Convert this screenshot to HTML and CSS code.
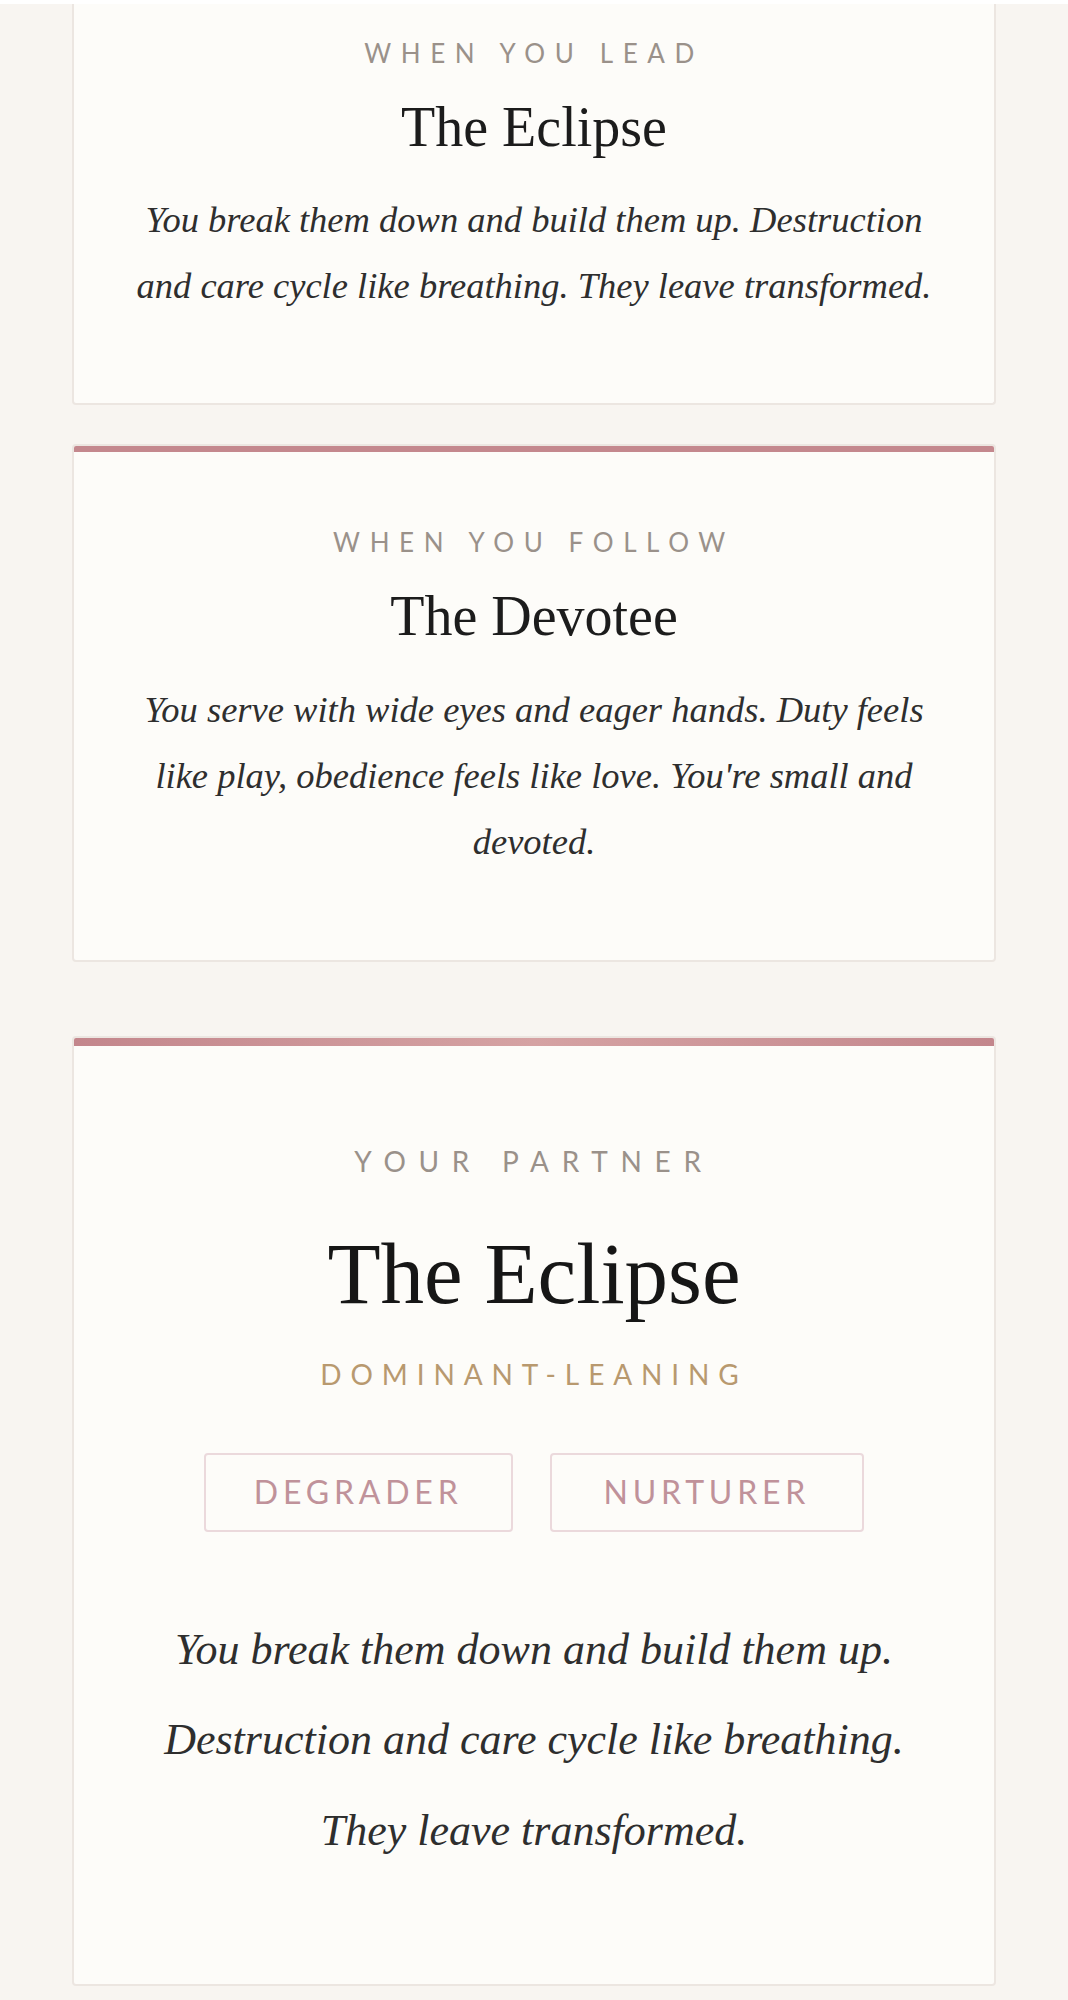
FILE: index.html
```html
<!DOCTYPE html>
<html lang="en">
<head>
<meta charset="utf-8">
<title>Your Results</title>
<link rel="stylesheet" href="styles.css">
</head>
<body>
<div class="topbar"></div>
<main class="page">
  <section class="card card--cut">
    <div class="card-body card-body--cut">
      <p class="label">When you lead</p>
      <h2 class="title">The Eclipse</h2>
      <p class="desc">You break them down and build them up. Destruction and care cycle like breathing. They leave transformed.</p>
    </div>
  </section>

  <section class="card card--accent">
    <div class="card-body">
      <p class="label">When you follow</p>
      <h2 class="title">The Devotee</h2>
      <p class="desc">You serve with wide eyes and eager hands. Duty feels like play, obedience feels like love. You're small and devoted.</p>
    </div>
  </section>

  <section class="card card--partner">
    <div class="card-body card-body--partner">
      <p class="label label--lg">Your partner</p>
      <h1 class="title title--lg">The Eclipse</h1>
      <p class="leaning">Dominant-leaning</p>
      <div class="tags">
        <span class="tag">Degrader</span>
        <span class="tag tag--wide">Nurturer</span>
      </div>
      <p class="desc desc--lg">You break them down and build them up. Destruction and care cycle like breathing. They leave transformed.</p>
    </div>
  </section>
</main>
</body>
</html>
```

FILE: styles.css
```css
html, body {
  margin: 0;
  padding: 0;
  background: #f8f5f1;
}

body {
  font-family: "Liberation Serif", "Times New Roman", serif;
  color: #1c1c1c;
}

.topbar {
  height: 4px;
  background: #ffffff;
}

.page {
  padding: 0 72px;
  display: flex;
  flex-direction: column;
}

.card {
  background: #fdfcf9;
  border: 2px solid #ece6e1;
  border-radius: 4px;
  overflow: hidden;
}

.card--cut {
  border-top: none;
  border-radius: 0 0 4px 4px;
}

.card--accent {
  margin-top: 39px;
}

.card--accent::before {
  content: "";
  display: block;
  height: 6px;
  background: #c4888e;
}

.card--partner {
  margin-top: 74px;
}

.card--partner::before {
  content: "";
  display: block;
  height: 8px;
  background: linear-gradient(90deg, #c3868c 0%, #d5a2a3 50%, #c3868c 100%);
}

.card-body {
  display: flex;
  flex-direction: column;
  align-items: center;
  text-align: center;
  padding: 75.5px 50px 85.5px;
}

.card-body--cut {
  padding-top: 33.5px;
  padding-bottom: 84px;
}

.card-body--partner {
  padding: 99.5px 65px 108px;
}

.label {
  margin: 0;
  font-family: Lato, "Open Sans", sans-serif;
  font-weight: 400;
  font-size: 26px;
  line-height: 1.2;
  letter-spacing: 9.6px;
  text-transform: uppercase;
  color: #9a918a;
}

.label--lg {
  font-size: 28px;
  letter-spacing: 12.7px;
}

.title {
  margin: 25px 0 0;
  font-family: "Liberation Serif", "Times New Roman", serif;
  font-weight: 400;
  font-size: 56px;
  line-height: 1.2;
  color: #1c1c1c;
}

.title--lg {
  margin-top: 43.4px;
  font-size: 87px;
  color: #161616;
}

.desc {
  margin: 26.5px 0 0;
  max-width: 820px;
  font-family: "Liberation Serif", "Times New Roman", serif;
  font-style: italic;
  font-size: 36.5px;
  line-height: 1.8;
  color: #2e2e2e;
}

.desc--lg {
  margin-top: 73px;
  max-width: 780px;
  font-size: 44px;
  line-height: 90.5px;
}

.leaning {
  margin: 31.5px 0 0;
  font-family: Lato, "Open Sans", sans-serif;
  font-weight: 400;
  font-size: 28px;
  line-height: 1.2;
  letter-spacing: 8.9px;
  text-transform: uppercase;
  color: #b8996f;
}

.tags {
  margin-top: 61px;
  display: flex;
  gap: 37px;
  justify-content: center;
}

.tag {
  display: block;
  padding: 18.3px 48px;
  border: 2px solid #ebd9dc;
  border-radius: 4px;
  font-family: Lato, "Open Sans", sans-serif;
  font-weight: 400;
  font-size: 32px;
  line-height: 1.2;
  letter-spacing: 4.8px;
  text-transform: uppercase;
  color: #c0929a;
}

.tag--wide {
  padding: 18.3px 52px;
}
```
